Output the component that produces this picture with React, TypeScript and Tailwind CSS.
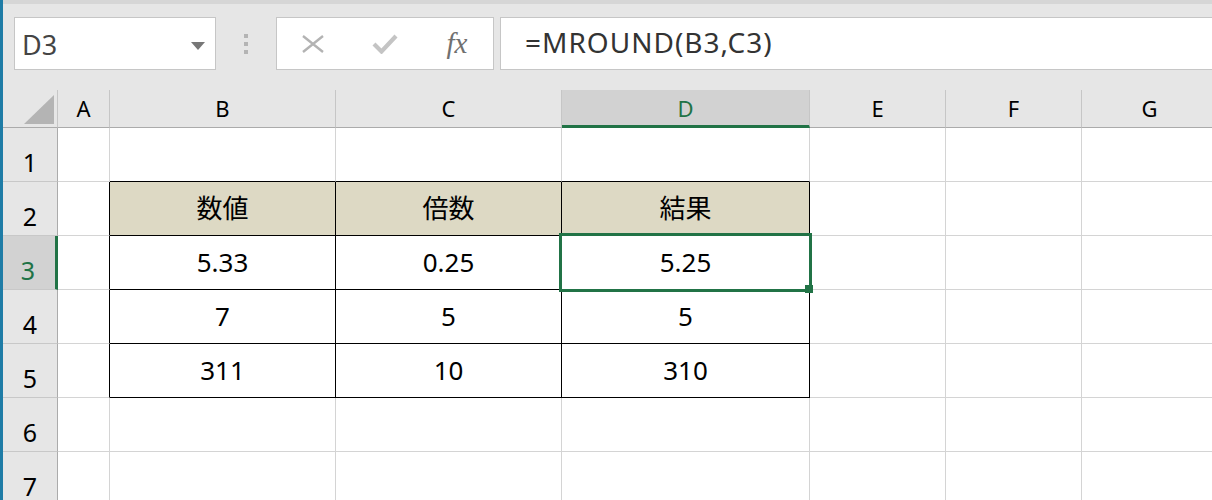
import type { ReactNode } from 'react';

const columns = ['A', 'B', 'C', 'D', 'E', 'F', 'G'];
const rows = [1, 2, 3, 4, 5, 6, 7];

const values: Record<string, string> = {
  B2: '数値',
  C2: '倍数',
  D2: '結果',
  B3: '5.33',
  C3: '0.25',
  D3: '5.25',
  B4: '7',
  C4: '5',
  D4: '5',
  B5: '311',
  C5: '10',
  D5: '310',
};

const activeCol = 'D';
const activeRow = 3;

function NameBox() {
  return (
    <div className="ml-[11px] flex h-[53px] w-[202px] items-center justify-between border border-[#c6c6c6] bg-white pt-1 pl-[7px] pr-[10px]">
      <span className="text-[27px] leading-normal text-[#444]">D3</span>
      <svg width="14" height="8" viewBox="0 0 14 8" aria-hidden="true">
        <path d="M0 0h14L7 8z" fill="#777" />
      </svg>
    </div>
  );
}

function FormulaButtons() {
  return (
    <div className="flex h-[53px] w-[218px] items-center border border-[#c6c6c6] bg-white">
      <div className="flex w-[72px] items-center justify-center">
        <svg width="24" height="20" viewBox="0 0 24 20" aria-hidden="true">
          <path d="M2 2l20 16M22 2L2 18" stroke="#b3b3b3" strokeWidth="2.4" fill="none" />
        </svg>
      </div>
      <div className="flex w-[72px] items-center justify-center">
        <svg width="26" height="20" viewBox="0 0 26 20" aria-hidden="true">
          <path d="M2 10l7.5 7.5L24 2" stroke="#c4c4c4" strokeWidth="4.2" fill="none" />
        </svg>
      </div>
      <div className="flex w-[72px] items-center justify-center">
        <span className="font-['Liberation_Serif',serif] text-[29px] italic leading-none text-[#707070]">
          fx
        </span>
      </div>
    </div>
  );
}

function Toolbar() {
  return (
    <div className="h-[90px] shrink-0 bg-[#e6e6e6]">
      <div className="h-[4px] bg-[#d6d6d6]" />
      <div className="mt-[13px] flex items-center">
        <NameBox />
        <div className="flex w-[60px] flex-col items-center gap-[4px]">
          <span className="size-[4px] bg-[#b4b4b4]" />
          <span className="size-[4px] bg-[#b4b4b4]" />
          <span className="size-[4px] bg-[#b4b4b4]" />
        </div>
        <FormulaButtons />
        <div className="-mr-[4px] ml-[6px] flex h-[53px] flex-1 items-center border border-[#c6c6c6] bg-white pb-1 pl-[24px]">
          <span className="text-[28px] leading-normal tracking-[1px] text-[#333]">
            =MROUND(B3,C3)
          </span>
        </div>
      </div>
    </div>
  );
}

function ColumnHeader({ label }: { label: string }) {
  const active = label === activeCol;
  return (
    <div
      className={
        active
          ? 'flex items-center justify-center border-r border-b-[3px] border-r-[#c6c6c6] border-b-[#217346] bg-[#d2d2d2] pt-[2px] text-[22px] leading-normal text-[#217346]'
          : 'flex items-center justify-center border-r border-b border-r-[#c6c6c6] border-b-[#ababab] bg-[#e6e6e6] text-[22px] leading-normal text-black'
      }
    >
      {label}
    </div>
  );
}

function RowHeader({ n }: { n: number }) {
  const active = n === activeRow;
  return (
    <div
      className={
        active
          ? 'flex items-end justify-center border-r-[3px] border-b border-r-[#217346] border-b-[#c8c8c8] bg-[#d2d2d2] pr-[2px] text-[25px] leading-normal text-[#217346]'
          : 'flex items-end justify-center border-r border-b border-r-[#ababab] border-b-[#c8c8c8] bg-[#e6e6e6] text-[25px] leading-normal text-black'
      }
    >
      {n}
    </div>
  );
}

function Cell({ col, row }: { col: number; row: number }) {
  const key = columns[col] + row;
  const inTable = row >= 2 && row <= 5 && col >= 1 && col <= 3;
  const blackRight = inTable || (col === 0 && row >= 2 && row <= 5);
  const blackBottom = col >= 1 && col <= 3 && row >= 1 && row <= 5;
  const selected = columns[col] === activeCol && row === activeRow;

  let overlay: ReactNode = null;
  if (selected) {
    overlay = (
      <>
        <div className="absolute -inset-[3px] z-10 border-[3px] border-[#217346]" />
        <div className="absolute -right-[4px] -bottom-[4px] z-20 size-[8px] bg-[#217346]" />
      </>
    );
  }

  return (
    <div
      className={[
        'relative flex items-center justify-center border-r border-b text-[26px] leading-normal text-black',
        row === 2 && inTable ? 'bg-[#ddd9c4]' : 'bg-white',
        blackRight ? 'border-r-black' : 'border-r-[#d4d4d4]',
        blackBottom ? 'border-b-black' : 'border-b-[#d4d4d4]',
      ].join(' ')}
    >
      {values[key] ?? ''}
      {overlay}
    </div>
  );
}

function Sheet() {
  return (
    <div className="grid grid-cols-[55px_52px_226px_226px_248px_136px_136px_136px] grid-rows-[38px_repeat(7,54px)]">
      <div className="flex items-end justify-end border-r border-b border-r-[#c6c6c6] border-b-[#ababab] bg-[#e6e6e6] pr-[3px] pb-[3px]">
        <svg width="30" height="29" viewBox="0 0 30 29" aria-hidden="true">
          <path d="M30 0v29H0z" fill="#b4b4b4" />
        </svg>
      </div>
      {columns.map((c) => (
        <ColumnHeader key={c} label={c} />
      ))}
      {rows.map((r) => (
        <div key={r} className="contents">
          <RowHeader n={r} />
          {columns.map((c, i) => (
            <Cell key={c} col={i} row={r} />
          ))}
        </div>
      ))}
    </div>
  );
}

export default function App() {
  return (
    <div className="flex h-[500px] w-[1212px] overflow-hidden bg-[#e6e6e6] font-['Noto_Sans','Noto_Sans_CJK_JP',sans-serif]">
      <div className="w-[3px] shrink-0 bg-[#1f7ca6]" />
      <div className="flex min-w-0 flex-1 flex-col">
        <Toolbar />
        <div className="shrink-0">
          <Sheet />
        </div>
      </div>
    </div>
  );
}
